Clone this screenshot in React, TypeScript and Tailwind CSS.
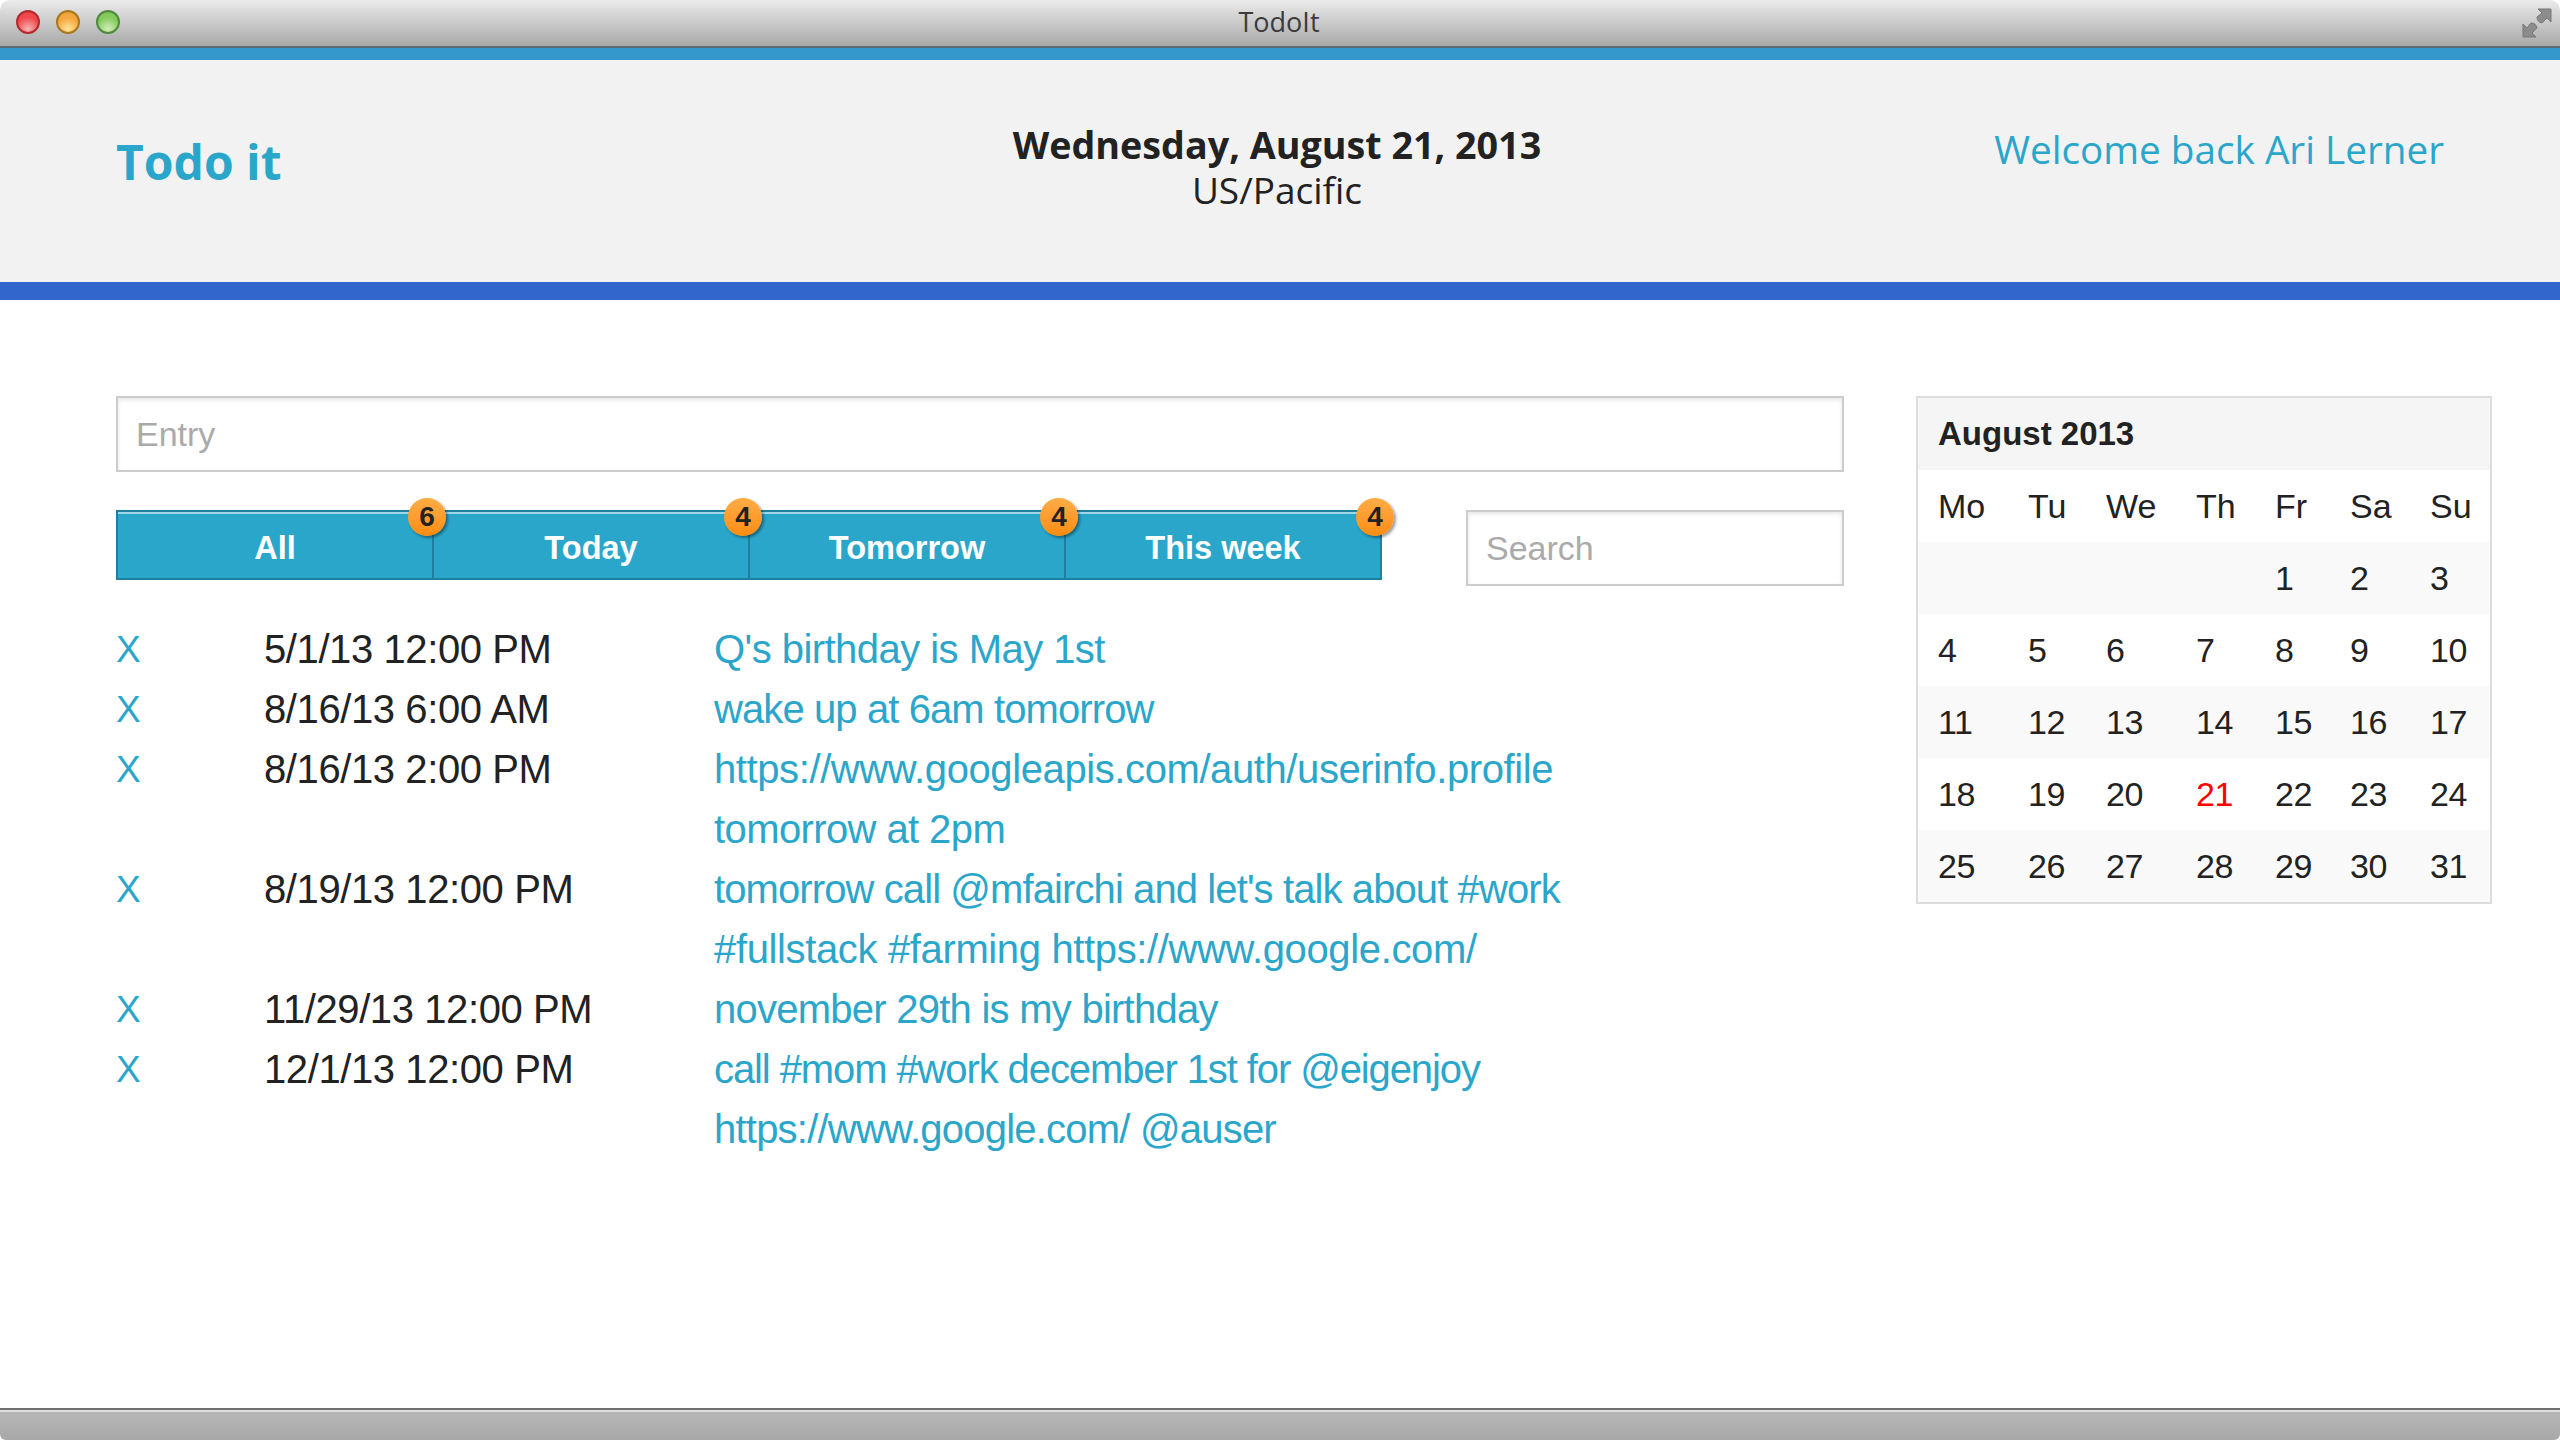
const rows: [string, string, [string, string][]][] = [
  ["X", "5/1/13 12:00 PM", [["Q's birthday is May 1st", "tracking-[-0.54px]"]]],
  ["X", "8/16/13 6:00 AM", [["wake up at 6am tomorrow", "tracking-[-0.9px]"]]],
  ["X", "8/16/13 2:00 PM", [["https://www.googleapis.com/auth/userinfo.profile", "tracking-[-0.4px]"], ["tomorrow at 2pm", "tracking-[-0.6px]"]]],
  ["X", "8/19/13 12:00 PM", [["tomorrow call @mfairchi and let's talk about #work", "tracking-[-0.9px]"], ["#fullstack #farming https://www.google.com/", "tracking-[-0.36px]"]]],
  ["X", "11/29/13 12:00 PM", [["november 29th is my birthday", "tracking-[-0.75px]"]]],
  ["X", "12/1/13 12:00 PM", [["call #mom #work december 1st for @eigenjoy", "tracking-[-1.1px]"], ["https://www.google.com/ @auser", "tracking-[-0.78px]"]]],
];

const tabs: [string, string][] = [["All", "6"], ["Today", "4"], ["Tomorrow", "4"], ["This week", "4"]];

const weeks = [
  ["", "", "", "", "1", "2", "3"],
  ["4", "5", "6", "7", "8", "9", "10"],
  ["11", "12", "13", "14", "15", "16", "17"],
  ["18", "19", "20", "21", "22", "23", "24"],
  ["25", "26", "27", "28", "29", "30", "31"],
];
const days = ["Mo", "Tu", "We", "Th", "Fr", "Sa", "Su"];
const widths = ["w-[110px]", "w-[78px]", "w-[90px]", "w-[79px]", "w-[75px]", "w-[80px]", "w-[60px]"];

function Light({ outer, mid, low }: { outer: string; mid: string; low: string }) {
  return (
    <span
      className="block h-6 w-6 rounded-full border-2"
      style={{
        borderColor: outer,
        background: `radial-gradient(circle at 50% 85%, ${low} 0%, ${mid} 60%, ${mid} 75%, ${outer} 115%)`,
      }}
    />
  );
}

export default function App() {
  return (
    <div className="flex h-[1440px] w-[2560px] flex-col overflow-hidden bg-white font-['Liberation_Sans',Arial,sans-serif] text-[#222222]">
      <div className="relative flex h-[48px] shrink-0 items-center justify-center rounded-t-[10px] border-b-2 border-[#5f6a70] bg-gradient-to-b from-[#ebebeb] to-[#a9a9a9]">
        <div className="absolute left-4 top-[10px] flex gap-4">
          <Light outer="#b32a2e" mid="#f0484c" low="#f8b4b4" />
          <Light outer="#a8781e" mid="#f5a63c" low="#fbe596" />
          <Light outer="#4f8a3c" mid="#84c95c" low="#d3eeb8" />
        </div>
        <span className="mt-[-3px] mr-[2px] font-['Open_Sans',sans-serif] text-[27px] leading-none text-[#3c3c3c]">TodoIt</span>
        <svg className="absolute right-[8px] top-[8px]" width="30" height="30" viewBox="0 0 30 30" fill="#8c8c8c" stroke="#777777" strokeWidth="1">
          <path d="M16 1H29V14L25 10L20 15Q15 14 15 9L20 5Z" />
          <path d="M1 16V29H14L10 25L15 20Q14 15 9 15L5 20Z" />
        </svg>
      </div>
      <div className="h-3 shrink-0 bg-[#3498cc]" />
      <header className="flex h-[222px] shrink-0 items-start justify-between bg-[#f2f2f3] pl-[116px] pr-[116px] font-['Open_Sans',sans-serif]">
        <div className="w-[500px] pt-[67px] text-[48px] font-bold leading-[70px] text-[#2ba6cb]">Todo it</div>
        <div className="mr-[6px] pt-[62px] text-center">
          <div className="text-[37.7px] font-bold leading-[46px] text-[#222222]">Wednesday, August 21, 2013</div>
          <div className="text-[37px] leading-[44px] text-[#222222]">US/Pacific</div>
        </div>
        <div className="w-[500px] pt-[61px] text-right text-[38.7px] leading-[56px] text-[#2ba6cb]">Welcome back Ari Lerner</div>
      </header>
      <div className="h-[18px] shrink-0 bg-[#3366cc]" />
      <main className="flex min-h-0 flex-1 items-start pl-[116px] pt-[96px]">
        <section className="w-[1728px] shrink-0">
          <input
            readOnly
            placeholder="Entry"
            className="block h-[76px] w-full border-2 border-[#cccccc] bg-white px-[18px] text-[34px] shadow-[inset_0_2px_4px_rgba(0,0,0,0.1)] outline-none placeholder:text-[#aaaaaa]"
          />
          <div className="mt-[38px] flex items-start justify-between">
            <div className="flex h-[70px] w-[1266px] border-2 border-[#1f7f9f] bg-[#2ba6cb] shadow-[inset_0_2px_0_rgba(255,255,255,0.55)]">
              {tabs.map(([label, n], i) => (
                <div
                  key={label}
                  className={
                    "relative flex flex-1 items-center justify-center pt-[6px] text-[32.5px] font-bold text-white " +
                    (i < 3 ? "border-r-2 border-[#1f7f9f]" : "")
                  }
                >
                  {label}
                  <span className="absolute right-[-14px] top-[-14px] z-10 flex h-[38px] w-[38px] items-center justify-center rounded-full bg-gradient-to-b from-[#ffad45] to-[#ff8c0a] text-[28px] font-bold leading-none text-[#222222] shadow-[2px_2px_3px_rgba(0,0,0,0.4)]">
                    {n}
                  </span>
                </div>
              ))}
            </div>
            <input
              readOnly
              placeholder="Search"
              className="block h-[76px] w-[378px] border-2 border-[#cccccc] bg-white px-[18px] text-[34px] shadow-[inset_0_2px_4px_rgba(0,0,0,0.1)] outline-none placeholder:text-[#aaaaaa]"
            />
          </div>
          <div className="mt-[33px] text-[40px] leading-[60px] tracking-[-0.4px]">
            {rows.map(([x, when, text], i) => (
              <div key={i} className="flex items-start">
                <div className="h-[60px] w-[148px] text-[37px] leading-[62px] text-[#2ba6cb]">{x}</div>
                <div className="w-[450px]">{when}</div>
                <div className="w-[860px] text-[#2ba6cb]">
                  {text.map(([t, track]) => (
                    <div key={t} className={"whitespace-nowrap " + track}>{t}</div>
                  ))}
                </div>
              </div>
            ))}
          </div>
        </section>
        <aside className="ml-[72px] w-[576px] shrink-0 border-2 border-[#dddddd] text-[34px]">
          <table className="w-full table-fixed border-collapse">
            <colgroup>
              {widths.map((w, i) => (
                <col key={i} className={w} />
              ))}
            </colgroup>
            <thead>
              <tr className="h-[72px] bg-[#f5f5f5]">
                <th colSpan={7} className="pl-[20px] text-left text-[33px] font-bold">August 2013</th>
              </tr>
              <tr className="h-[72px]">
                {days.map((d, i) => (
                  <th key={d} className={"text-left font-normal " + (i === 0 ? "pl-[20px]" : "")}>{d}</th>
                ))}
              </tr>
            </thead>
            <tbody className="tracking-[-0.5px]">
              {weeks.map((w, r) => (
                <tr key={r} className={"h-[72px] " + (r % 2 === 0 ? "bg-[#f9f9f9]" : "bg-white")}>
                  {w.map((d, i) => (
                    <td key={i} className={(i === 0 ? "pl-[20px] " : "") + (d === "21" ? "text-[#ff0000]" : "")}>{d}</td>
                  ))}
                </tr>
              ))}
            </tbody>
          </table>
        </aside>
      </main>
      <div className="h-[32px] shrink-0 rounded-b-[6px] border-t-2 border-[#707070] bg-gradient-to-b from-[#b8b8b8] to-[#a8a8a8] shadow-[inset_0_2px_0_#dedede]" />
    </div>
  );
}
